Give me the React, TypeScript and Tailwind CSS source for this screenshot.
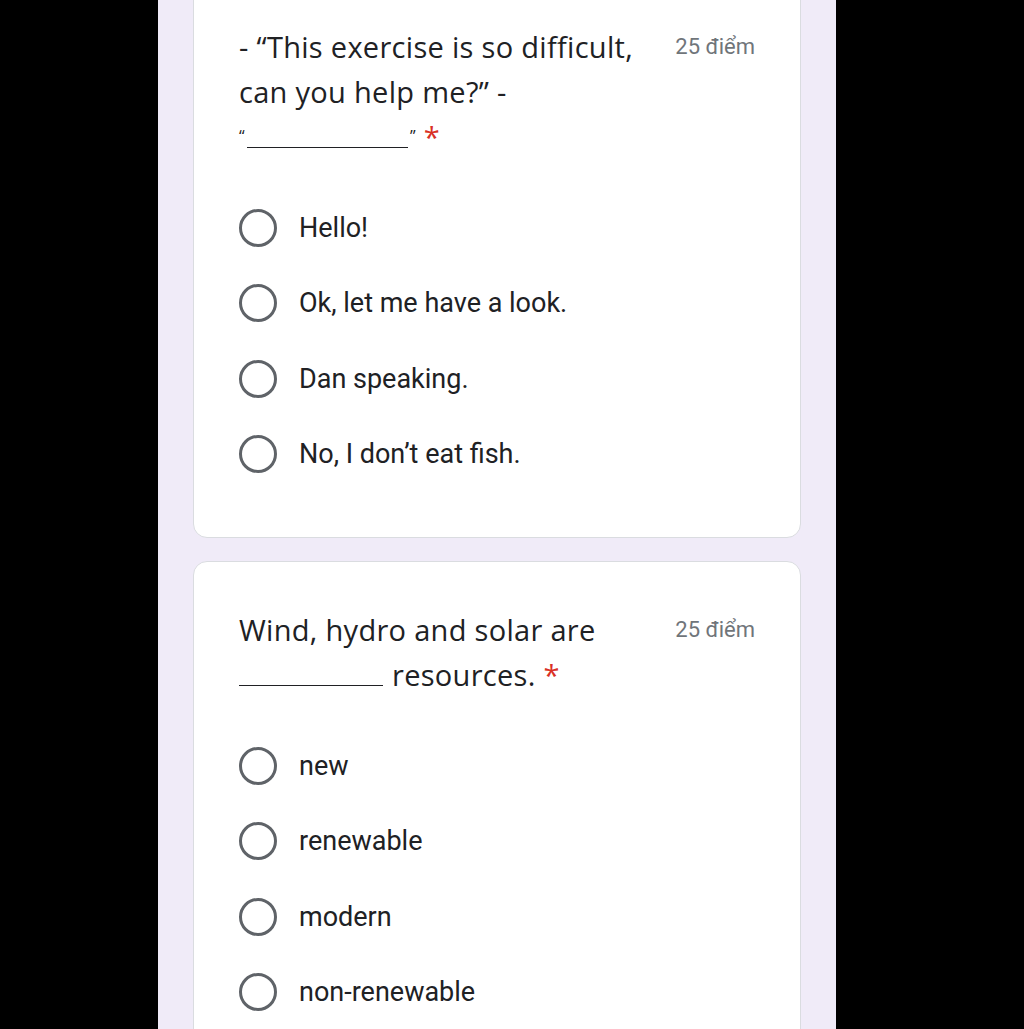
import React from "react";

const titleFont = { fontFamily: '"Open Sans", "Noto Sans", sans-serif' };

function Radio({ label }: { label: string }) {
  return (
    <div className="flex items-center h-[75.5px]">
      <div className="w-[38px] h-[38px] rounded-full border-[3px] border-[#5f6368] shrink-0" />
      <span className="ml-[22px] text-[27px] text-[#202124]" style={{ fontFamily: 'Roboto, "Liberation Sans", sans-serif' }}>
        {label}
      </span>
    </div>
  );
}

function Card({ title, options, className }: { title: React.ReactNode; options: string[]; className?: string }) {
  return (
    <div className={"bg-white border border-[#dadce0] rounded-[14px] pl-[45px] pr-[45px] pt-[45px] pb-[45px] " + (className ?? "")}>
      <div className="flex items-start justify-between">
        <div className="w-[420px] text-[29px] tracking-[0.3px] leading-[45px] text-[#202124]" style={titleFont}>
          {title}
        </div>
        <div className="text-[22px] leading-[45px] text-[#70757a] whitespace-nowrap" style={{ fontFamily: 'Roboto, "Liberation Sans", sans-serif' }}>
          25 điểm
        </div>
      </div>
      <div className="mt-[31px]">
        {options.map((o) => (
          <Radio key={o} label={o} />
        ))}
      </div>
    </div>
  );
}

export default function App() {
  return (
    <div className="w-[1024px] h-[1029px] bg-black overflow-hidden">
      <div className="ml-[158px] w-[678px] h-full bg-[#f0ebf8] px-[35px] overflow-hidden">
        <div className="-mt-[22px]">
          <Card
            title={
              <>
                - “This exercise is so difficult, can you help me?” -
                <br />
                <span className="text-[16px] align-top leading-[45px]">“</span>
                <span className="inline-block w-[161px] border-b-[1.5px] border-[#202124] h-[30px] mx-[2px] align-baseline" />
                <span className="text-[16px] align-top leading-[45px]">”</span>{" "}
                <span className="text-[#d93025]">*</span>
              </>
            }
            options={["Hello!", "Ok, let me have a look.", "Dan speaking.", "No, I don’t eat fish."]}
          />
          <Card
            className="mt-[23px]"
            title={
              <>
                Wind, hydro and solar are
                <br />
                <span className="inline-block w-[144px] border-b-[1.5px] border-[#202124] h-[30px] mr-[9px] align-baseline" />
                resources. <span className="text-[#d93025]">*</span>
              </>
            }
            options={["new", "renewable", "modern", "non-renewable"]}
          />
        </div>
      </div>
    </div>
  );
}
